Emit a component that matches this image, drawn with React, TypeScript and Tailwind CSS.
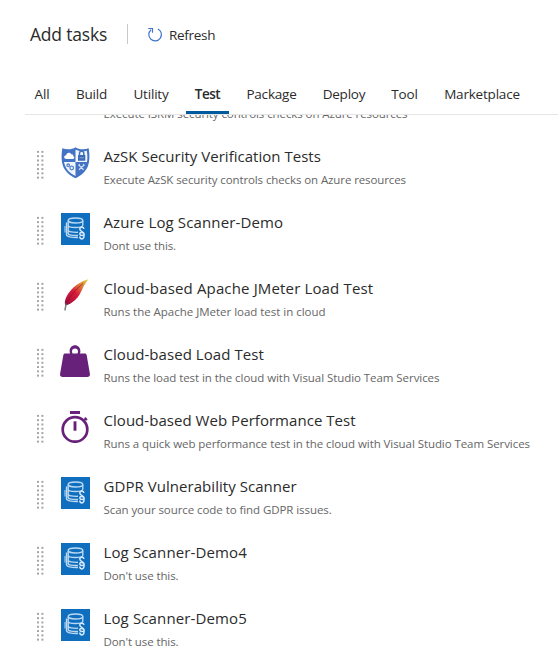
import React from "react";

function Refresh() {
  return (
    <svg width="16" height="16" viewBox="0 0 16 16" fill="none" stroke="#3f74c8" strokeWidth="1.15">
      <path d="M10.9 1.9A6.3 6.3 0 1 1 4.1 2.7" />
      <path d="M1.2 1.500H5.500V5.700" />
    </svg>
  );
}

function Grip() {
  return (
    <svg width="7" height="30" viewBox="0 0 7 30" fill="#a3a3a3">
      {[0, 1, 2, 3, 4, 5, 6].map((i) => (
        <g key={i}>
          <rect x="0" y={0.9 + i * 4.3} width="2" height="1.900" />
          <rect x="4.400" y={0.9 + i * 4.3} width="2" height="1.900" />
        </g>
      ))}
    </svg>
  );
}

function Shield() {
  return (
    <svg width="30" height="32" viewBox="0 0 30 32">
      <path d="M14.500.3C11.200 2.600 6 3 1.300 1.300.200 8 .200 14 2 19c2 5.500 7 9.500 12.500 12.300C20 28.500 25 24.500 27 19c1.800-5 1.800-11 .7-17.700C23 3 17.800 2.600 14.500.3Z" fill="#4373c4" />
      <path d="M14.500 2.600c3 1.800 7 2.200 11.300 1.200.7 4 .8 7.700.2 11.200H14.500ZM3 15h11.500v13.900C8.500 26.300 4.200 21.500 3 15Z" fill="#f1f5fc" />
      <path d="M5.500 12c-3 0-3-3.500-.4-3.700C5.500 5.500 9 5 10.200 7.300c2-.2 2.400 1.600 2 2 1.900.5 1.200 2.700-.3 2.700Z" fill="#fff" />
      <rect x="17" y="8" width="7.300" height="5.700" rx=".5" fill="#3b69b5" />
      <path d="M18.500 8.500V6.300c0-2.800 4.300-2.800 4.300 0v2.200" fill="none" stroke="#4373c4" strokeWidth="1.500" />
      <path d="M18.500 10.800h4.300" stroke="#9db8e3" strokeWidth=".8" />
      <g fill="none" stroke="#5c86cb" strokeWidth="1.300">
        <circle cx="7.200" cy="18.300" r="1.300" />
        <circle cx="10.700" cy="21" r="1.800" />
      </g>
      <path d="m18 18.200 4.600 4.500m.2-4.500-4.800 4.500M17.400 18.500l1.400-1.300m3.300 0 1.400 1.300" stroke="#d3e0f5" strokeWidth="1.200" />
    </svg>
  );
}

function Scanner() {
  return (
    <svg width="30" height="32" viewBox="0 0 30 32" fill="none">
      <rect width="29" height="32" fill="#106ebe" />
      <g stroke="#b9d8f2" strokeWidth="1.400">
        <ellipse cx="14.500" cy="7.500" rx="7.300" ry="2.500" />
        <path d="M7.200 7.700v4.500c0 3 14.600 3 14.600 0V7.700M5.500 9.500v12c0 2 4.500 3.200 11.500 3M7.200 12v5c0 1.800 4.500 2.500 9.800 2.300M7.200 17v3.500c0 1.600 4 2.200 9.800 2" />
        <path d="M4 13v6.500" strokeWidth="1" />
      </g>
      <path d="M23 15.800c-.5-2.200-4.200-2-4.200.3 0 2.600 4.300 2.400 4.300 4.800 0 2.100-4.300 2-4.300-.1s4.300-1.700 4.300.8c0 2 0 4.300-2.100 4.300-1.600 0-2.200-.9-2.200-2.400" stroke="#d7eafa" strokeWidth="1.500" />
    </svg>
  );
}

function Feather() {
  return (
    <svg width="30" height="32" viewBox="0 0 30 32">
      <defs>
        <linearGradient id="feather" x1="4" y1="28" x2="27" y2="1" gradientUnits="userSpaceOnUse">
          <stop stopColor="#62133d" />
          <stop offset=".2" stopColor="#b80f3c" />
          <stop offset=".5" stopColor="#d91c38" />
          <stop offset=".7" stopColor="#df6b38" />
          <stop offset=".87" stopColor="#e2a13c" />
          <stop offset="1" stopColor="#d8dd55" />
        </linearGradient>
      </defs>
      <path d="M27.500.2C20.500 1.800 13 7 8.300 13.300c-3.200 4.200-5.100 8.700-4.200 12.700l1.700.3c6-2.600 10.400-6.200 13.100-11.300C21.500 9.800 23.500 4.500 27.500.2Z" fill="url(#feather)" />
      <path d="M22 4.500C14 11 8 18.500 5 26" fill="none" stroke="#681638" strokeWidth=".9" opacity=".65" />
      <path d="M5.200 24.500 3.900 31.500" stroke="#777" strokeWidth="1.400" />
    </svg>
  );
}

function Weight() {
  return (
    <svg className="-ml-px" width="31" height="32" viewBox="-1 0 31 32">
      <path fill="#68217a" fillRule="evenodd" d="M9 8.500C7.500 3.500 10.500.2 14 .2S20.500 3.500 19 8.500h4.800c1 0 1.600.6 1.900 1.700l3.200 18.500c.4 2-.6 3.300-2.600 3.300H1.700c-2 0-3-1.300-2.600-3.300L2.300 10.200c.3-1.100.9-1.700 1.900-1.700Zm2.500 0h5C17.800 5.500 16.500 3.400 14 3.400s-3.800 2.100-2.500 5.100Z" />
    </svg>
  );
}

function Stopwatch() {
  return (
    <svg width="30" height="32" viewBox="0 0 30 32" fill="none" stroke="#68217a">
      <path d="M9 1.500h10" strokeWidth="3" />
      <circle cx="14" cy="18.400" r="12.300" strokeWidth="2.700" />
      <path d="M14 10.300v9.400" strokeWidth="2.900" />
      <path d="m22.500 10.100 2.700-2.700m-1.500-.7 2.300 2.300" strokeWidth="1.900" />
    </svg>
  );
}

const tasks = [
  { title: "AzSK Security Verification Tests", desc: "Execute AzSK security controls checks on Azure resources", icon: Shield, tracking: "tracking-[0.02px]", descTracking: "tracking-[-0.1px]" },
  { title: "Azure Log Scanner-Demo", desc: "Dont use this.", icon: Scanner, tracking: "tracking-[0.13px]", descTracking: "tracking-[-0.1px]" },
  { title: "Cloud-based Apache JMeter Load Test", desc: "Runs the Apache JMeter load test in cloud", icon: Feather, tracking: "tracking-[0.15px]", descTracking: "tracking-[-0.02px]" },
  { title: "Cloud-based Load Test", desc: "Runs the load test in the cloud with Visual Studio Team Services", icon: Weight, tracking: "tracking-[0.06px]", descTracking: "tracking-[-0.06px]" },
  { title: "Cloud-based Web Performance Test", desc: "Runs a quick web performance test in the cloud with Visual Studio Team Services", icon: Stopwatch, tracking: "tracking-[0.04px]", descTracking: "tracking-[-0.07px]" },
  { title: "GDPR Vulnerability Scanner", desc: "Scan your source code to find GDPR issues.", icon: Scanner, tracking: "tracking-[0.05px]", descTracking: "tracking-[-0.07px]" },
  { title: "Log Scanner-Demo4", desc: "Don't use this.", icon: Scanner, tracking: "tracking-[0.13px]", descTracking: "tracking-[-0.1px]" },
  { title: "Log Scanner-Demo5", desc: "Don't use this.", icon: Scanner, tracking: "tracking-[0.13px]", descTracking: "tracking-[-0.1px]" },
];

const tabs = [
  { name: "All", box: "w-[34px]" },
  { name: "Build", box: "w-[49px]" },
  { name: "Utility", box: "w-[54px]" },
  { name: "Test", box: "w-[43px]" },
  { name: "Package", box: "w-[69px]" },
  { name: "Deploy", box: "w-[60px]" },
  { name: "Tool", box: "w-[45px]" },
  { name: "Marketplace", box: "w-[94px]" },
];

export default function App() {
  return (
    <main className="flex h-[663px] w-[558px] flex-col overflow-hidden bg-white font-['Open_Sans','Noto_Sans',sans-serif] text-[#2b2b2b]">
      <header className="flex h-[69px] shrink-0 items-center pl-[30px]">
        <h1 className="w-[97px] whitespace-nowrap text-[17.5px] tracking-[-0.2px]">Add tasks</h1>
        <div className="mb-px h-5 w-px bg-[#c8c8c8]" />
        <button className="ml-[19px] flex items-center gap-1.5 pt-px text-[13.5px] tracking-[-0.3px]">
          <Refresh />
          <span>Refresh</span>
        </button>
      </header>
      <nav className="ml-[25px] flex h-[46px] shrink-0 gap-2 border-b border-[#e5e5e5] text-[13.5px] tracking-[-0.2px]">
        {tabs.map((t) => (
          <button
            key={t.name}
            className={`${t.box} flex shrink-0 justify-center whitespace-nowrap border-b-[3px] pt-[15px] leading-5 ${
              t.name === "Test" ? "border-[#005a9e] font-semibold tracking-[-0.5px]" : "border-transparent"
            }`}
          >
            {t.name}
          </button>
        ))}
      </nav>
      <section className="min-h-0 flex-1 overflow-hidden">
        <p className="-mt-[11px] mb-1.5 ml-[103.5px] h-5 whitespace-nowrap text-[11.5px] leading-5 tracking-[-0.09px] text-[#666]">
          Execute ISRM security controls checks on Azure resources
        </p>
        <ul>
          {tasks.map((t) => (
            <li key={t.title} className="flex h-[66px] pl-[37px]">
              <div className="w-6 shrink-0 pt-5">
                <Grip />
              </div>
              <div className="w-[43px] shrink-0 pt-[17px]">
                <t.icon />
              </div>
              <div className="-ml-[0.5px] whitespace-nowrap pt-[14px]">
                <h2 className={`text-[15px] leading-6 ${t.tracking}`}>{t.title}</h2>
                <p className={`pt-[2px] text-[11.5px] leading-5 text-[#666] ${t.descTracking}`}>{t.desc}</p>
              </div>
            </li>
          ))}
        </ul>
      </section>
    </main>
  );
}
